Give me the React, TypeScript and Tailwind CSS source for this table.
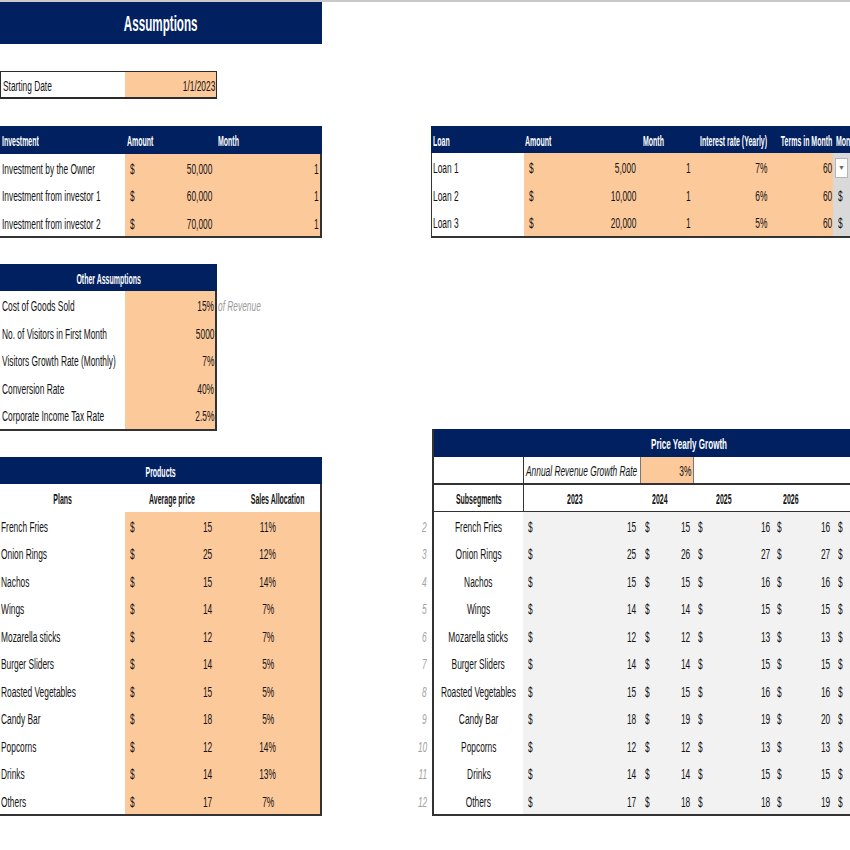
import clsx from 'clsx';
import type { ReactNode } from 'react';

const NAVY = 'bg-[#002060]';
const PEACH = 'bg-[#fcc99b]';

type Align = 'l' | 'r' | 'c';
const ORIGIN = { l: 'origin-left', r: 'origin-right', c: 'origin-center' };
const JUSTIFY = { l: 'justify-start', r: 'justify-end', c: 'justify-center' };

// text in the sheet is narrow (Calibri-like), so squeeze it horizontally
function T({
  children,
  a = 'l',
  bold = false,
  s,
  className,
}: {
  children: ReactNode;
  a?: Align;
  bold?: boolean;
  s?: string;
  className?: string;
}) {
  const scale = s ?? (bold ? 'scale-x-[0.45]' : 'scale-x-[0.54]');
  return (
    <span
      className={clsx(
        'inline-block whitespace-nowrap leading-none',
        bold && 'font-bold',
        scale,
        ORIGIN[a],
        className,
      )}
    >
      {children}
    </span>
  );
}

function Cell({
  w,
  a = 'l',
  className,
  children,
}: {
  w?: string;
  a?: Align;
  className?: string;
  children?: ReactNode;
}) {
  return (
    <div
      className={clsx(
        'flex h-full shrink-0 items-center pt-[2px]',
        JUSTIFY[a],
        w,
        className,
      )}
    >
      {children}
    </div>
  );
}

function Money({ v, w, pl = 'pl-[5px]', pr = 'pr-[4px]', className }: { v: ReactNode; w: string; pl?: string; pr?: string; className?: string }) {
  return (
    <div className={clsx('flex h-full shrink-0 items-center justify-between pt-[2px]', w, pl, pr, className)}>
      <T>$</T>
      <T a="r">{v}</T>
    </div>
  );
}

const investments = [
  ['Investment by the Owner', '50,000'],
  ['Investment from investor 1', '60,000'],
  ['Investment from investor 2', '70,000'],
];

const loans = [
  ['Loan 1', '5,000', '7%'],
  ['Loan 2', '10,000', '6%'],
  ['Loan 3', '20,000', '5%'],
];

const others = [
  ['Cost of Goods Sold', '15%'],
  ['No. of Visitors in First Month', '5000'],
  ['Visitors Growth Rate (Monthly)', '7%'],
  ['Conversion Rate', '40%'],
  ['Corporate Income Tax Rate', '2.5%'],
];

const products: [string, number, string, number[]][] = [
  ['French Fries', 15, '11%', [15, 15, 16, 16]],
  ['Onion Rings', 25, '12%', [25, 26, 27, 27]],
  ['Nachos', 15, '14%', [15, 15, 16, 16]],
  ['Wings', 14, '7%', [14, 14, 15, 15]],
  ['Mozarella sticks', 12, '7%', [12, 12, 13, 13]],
  ['Burger Sliders', 14, '5%', [14, 14, 15, 15]],
  ['Roasted Vegetables', 15, '5%', [15, 15, 16, 16]],
  ['Candy Bar', 18, '5%', [18, 19, 19, 20]],
  ['Popcorns', 12, '14%', [12, 12, 13, 13]],
  ['Drinks', 14, '13%', [14, 14, 15, 15]],
  ['Others', 17, '7%', [17, 18, 18, 19]],
];

export default function App() {
  return (
    <div className="h-[850px] w-[850px] overflow-hidden border-t-2 border-[#c9c9c9] bg-white font-['Liberation_Sans',Arial,sans-serif] text-[15.5px] text-[#141414]">
      <div className="flex">
        {/* left side */}
        <div className="w-[322px] shrink-0">
          <div className={clsx('flex h-[42px] items-center justify-center pt-[2px]', NAVY)}>
            <T a="c" bold s="scale-x-[0.53]" className="text-[22px] text-white">
              Assumptions
            </T>
          </div>

          {/* starting date */}
          <div className="mt-[27px] flex h-[28px] w-[217px] border border-b-2 border-[#2b2b2b]">
            <Cell w="w-[124px]" className="pl-[2px]">
              <T>Starting Date</T>
            </Cell>
            <Cell a="r" className={clsx('flex-1 pr-[1px]', PEACH)}>
              <T a="r">1/1/2023</T>
            </Cell>
          </div>

          {/* investment */}
          <div className="mt-[27px]">
            <div className={clsx('flex h-[27.5px] text-white', NAVY)}>
              <Cell w="w-[125px]" className="pl-[2px]">
                <T bold>Investment</T>
              </Cell>
              <Cell w="w-[93px]" className="pl-[2px]">
                <T bold>Amount</T>
              </Cell>
              <Cell className="flex-1">
                <T bold>Month</T>
              </Cell>
            </div>
            <div className="border-r-2 border-b-2 border-[#333]">
              {investments.map(([label, v]) => (
                <div key={label} className="flex h-[27.5px]">
                  <Cell w="w-[125px]" className="pl-[2px]">
                    <T>{label}</T>
                  </Cell>
                  <Money v={v} w="w-[93px]" pr="pr-[6px]" className={PEACH} />
                  <Cell a="r" className={clsx('flex-1 pr-[1px]', PEACH)}>
                    <T a="r">1</T>
                  </Cell>
                </div>
              ))}
            </div>
          </div>

          {/* other assumptions */}
          <div className="mt-[25.5px] flex">
            <div className="w-[217px] shrink-0">
              <div className={clsx('flex h-[27.5px] items-center justify-center pt-[2px] text-white', NAVY)}>
                <T a="c" bold>
                  Other Assumptions
                </T>
              </div>
              <div className="border-r-2 border-b-2 border-[#333]">
                {others.map(([label, v]) => (
                  <div key={label} className="flex h-[27.5px]">
                    <Cell w="w-[125px]" className="pl-[2px]">
                      <T>{label}</T>
                    </Cell>
                    <Cell a="r" className={clsx('flex-1 pr-[1px]', PEACH)}>
                      <T a="r">{v}</T>
                    </Cell>
                  </div>
                ))}
              </div>
            </div>
            <div className="pt-[27.5px]">
              <div className="flex h-[27.5px] items-center pt-[2px] pl-[1px]">
                <T className="italic text-[#9a9a9a]">of Revenue</T>
              </div>
            </div>
          </div>

          {/* products */}
          <div className="mt-[26px]">
            <div className={clsx('flex h-[27.5px] items-center justify-center pt-[2px] text-white', NAVY)}>
              <T a="c" bold>
                Products
              </T>
            </div>
            <div className="border-r-2 border-b-2 border-[#333]">
              <div className="flex h-[27.5px]">
                <Cell w="w-[125px]" a="c">
                  <T a="c" bold>Plans</T>
                </Cell>
                <Cell w="w-[93px]" a="c">
                  <T a="c" bold>Average price</T>
                </Cell>
                <Cell a="c" className="flex-1">
                  <T a="c" bold>Sales Allocation</T>
                </Cell>
              </div>
              {products.map(([name, price, alloc]) => (
                <div key={name} className="flex h-[27.5px]">
                  <Cell w="w-[125px]" className="pl-[1px]">
                    <T>{name}</T>
                  </Cell>
                  <Money v={price} w="w-[93px]" pr="pr-[6px]" className={PEACH} />
                  <Cell a="c" className={clsx('flex-1 pr-[2px]', PEACH)}>
                    <T a="c">{alloc}</T>
                  </Cell>
                </div>
              ))}
            </div>
          </div>
        </div>

        {/* right side */}
        <div className="ml-[93px] min-w-0 flex-1">
          {/* loans */}
          <div className="mt-[123.5px] ml-[16px]">
            <div className={clsx('flex h-[27.5px] text-white', NAVY)}>
              <Cell w="w-[93px]" className="pl-[2px]">
                <T bold>Loan</T>
              </Cell>
              <Cell w="w-[116px]" className="pl-[1px]">
                <T bold>Amount</T>
              </Cell>
              <Cell w="w-[60px]" className="pl-[3px]">
                <T bold>Month</T>
              </Cell>
              <Cell w="w-[70px]" a="r" className="pr-[3px]">
                <T a="r" bold>Interest rate (Yearly)</T>
              </Cell>
              <Cell w="w-[63px]" a="r" className="pr-[1px]">
                <T a="r" bold>Terms in Month</T>
              </Cell>
              <Cell className="flex-1 pl-[3px]">
                <T bold>Monthly Payment</T>
              </Cell>
            </div>
            <div className="border-b-2 border-l border-[#333]">
              {loans.map(([label, amt, rate], i) => (
                <div key={label} className="flex h-[27.5px]">
                  <Cell w="w-[92px]" className="pl-[1px]">
                    <T>{label}</T>
                  </Cell>
                  <Money v={amt} w="w-[116px]" className={PEACH} />
                  <Cell w="w-[60px]" a="r" className={clsx('pr-[9px]', PEACH)}>
                    <T a="r">1</T>
                  </Cell>
                  <Cell w="w-[70px]" a="r" className={clsx('pr-[3px]', PEACH)}>
                    <T a="r">{rate}</T>
                  </Cell>
                  <Cell w="w-[63px]" a="r" className={clsx('pr-[1px]', PEACH)}>
                    <T a="r">60</T>
                  </Cell>
                  <Cell className="flex-1 bg-[#d9d9d9] pl-[2px]">
                    {i === 0 ? (
                      <div className="flex h-[20px] w-[13px] items-center justify-center border border-[#b5b5b5] bg-white text-[7px] text-[#666]">
                        ▼
                      </div>
                    ) : (
                      <T className="ml-[3px]">$</T>
                    )}
                  </Cell>
                </div>
              ))}
            </div>
          </div>

          {/* price yearly growth */}
          <div className="mt-[191.5px] flex">
            <div className="w-[17px] shrink-0 pt-[82.5px]">
              {products.map(([name], i) => (
                <div key={name} className="flex h-[27.5px] items-center justify-end pt-[2px] pr-[5px]">
                  <T a="r" className="italic text-[#a3a3a3]">
                    {i + 2}
                  </T>
                </div>
              ))}
            </div>
            <div className="min-w-0 flex-1 border-b-2 border-l-2 border-[#333]">
              <div className={clsx('flex h-[27.5px] items-center pt-[2px] pl-[217px] text-white', NAVY)}>
                <T bold s="scale-x-[0.52]">Price Yearly Growth</T>
              </div>
              <div className="flex h-[28px] border-b-2 border-[#333]">
                <Cell w="w-[89px]" />
                <Cell w="w-[117px]" className="border-l border-[#333] pl-[2px]">
                  <T className="italic">Annual Revenue Growth Rate</T>
                </Cell>
                <Cell w="w-[54px]" a="r" className={clsx('border-r border-l border-[#777] pr-[2px]', PEACH)}>
                  <T a="r">3%</T>
                </Cell>
              </div>
              <div className="flex h-[27px] border-b border-[#333]">
                <Cell w="w-[89px]" a="c">
                  <T a="c" bold>Subsegments</T>
                </Cell>
                <Cell w="w-[117px]" className="border-l border-[#333] pl-[43px]">
                  <T bold>2023</T>
                </Cell>
                <Cell w="w-[55px]" className="pl-[12px]">
                  <T bold>2024</T>
                </Cell>
                <Cell w="w-[78px]" className="pl-[21px]">
                  <T bold>2025</T>
                </Cell>
                <Cell w="w-[62px]" className="pl-[10px]">
                  <T bold>2026</T>
                </Cell>
              </div>
              {products.map(([name, , , ys]) => (
                <div key={name} className="flex h-[27.5px]">
                  <Cell w="w-[89px]" a="c">
                    <T a="c">{name}</T>
                  </Cell>
                  <div className="flex h-full flex-1 bg-[#f2f2f2]">
                    <Money v={ys[0]} w="w-[117px]" />
                    <Money v={ys[1]} w="w-[55px]" pr="pr-[5px]" />
                    <Money v={ys[2]} w="w-[78px]" pl="pl-[3px]" pr="pr-[3px]" />
                    <Money v={ys[3]} w="w-[62px]" pl="pl-[4px]" pr="pr-[5px]" />
                    <Cell className="flex-1 pl-[3px]">
                      <T>$</T>
                    </Cell>
                  </div>
                </div>
              ))}
            </div>
          </div>
        </div>
      </div>
    </div>
  );
}
